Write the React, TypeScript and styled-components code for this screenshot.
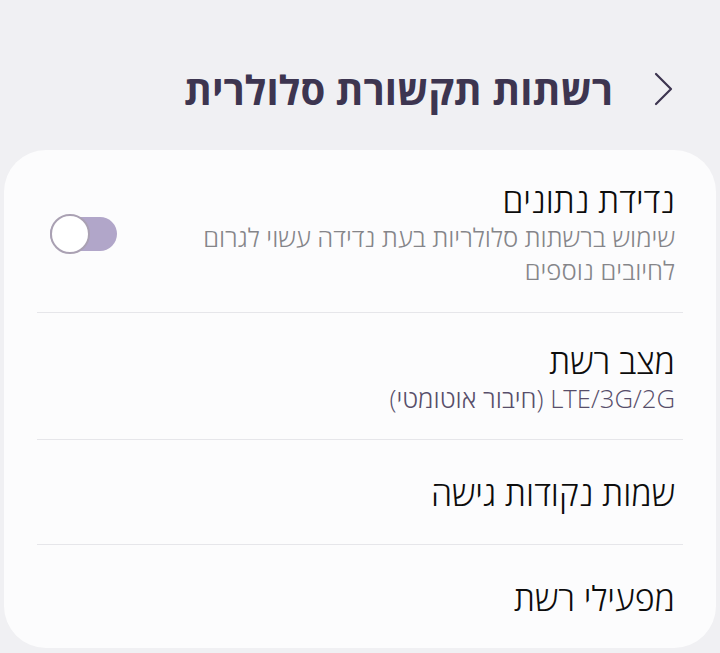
import React from 'react';
import styled, {createGlobalStyle} from "styled-components";

const GlobalStyle = createGlobalStyle`
  html, body {
    margin: 0;
    padding: 0;
    background: #f0f0f3;
  }
  body {
    font-family: "Open Sans", "DejaVu Sans", sans-serif;
  }
`;

const rows = [
  {
    key: "roaming",
    title: "נדידת נתונים",
    sub: "שימוש ברשתות סלולריות בעת נדידה עשוי לגרום לחיובים נוספים",
    toggle: true,
    pad: "30px 0 25px",
  },
  {
    key: "mode",
    title: "מצב רשת",
    sub: "LTE/3G/2G (חיבור אוטומטי)",
    accent: true,
    pad: "28px 0 24px",
  },
  {key: "apn", title: "שמות נקודות גישה", pad: "33px 0 31px"},
  {key: "operators", title: "מפעילי רשת", pad: "33px 0 31px"},
];

const App = () => {
  return (
    <>
      <GlobalStyle/>
      <Screen dir="rtl">
        <Header>
          <Back>
            <svg width="20" height="34" viewBox="0 0 20 34" fill="none">
              <path d="M2 2 L17 17 L2 32" stroke="#3d3550" strokeWidth="2.2" strokeLinecap="round" strokeLinejoin="round"/>
            </svg>
          </Back>
          <PageTitle>רשתות תקשורת סלולרית</PageTitle>
        </Header>
        <Card>
          {rows.map((row, i) => (
            <Item key={row.key} $last={i === rows.length - 1} $pad={row.pad}>
              <Texts>
                <ItemTitle>{row.title}</ItemTitle>
                {row.sub && <Sub $accent={row.accent}>{row.sub}</Sub>}
              </Texts>
              {row.toggle && (
                <Switch>
                  <Thumb/>
                </Switch>
              )}
            </Item>
          ))}
        </Card>
      </Screen>
    </>
  );
};

const Screen = styled.div`
  width: 720px;
  height: 653px;
  display: flex;
  flex-direction: column;
  overflow: hidden;
`;
const Header = styled.div`
  height: 150px;
  display: flex;
  align-items: center;
  padding: 28px 46px 0 0;
  gap: 41px;
  box-sizing: border-box;
`;
const Back = styled.div`
  display: flex;
  align-items: center;
`;
const PageTitle = styled.div`
  font-size: 40px;
  font-weight: 700;
  color: #3d3550;
`;
const Card = styled.div`
  margin: 0 4px;
  background: #fcfcfd;
  border-radius: 42px;
  padding: 0 33px;
  height: 498px;
`;
const Item = styled.div<{$last?: boolean; $pad: string}>`
  display: flex;
  align-items: center;
  justify-content: space-between;
  gap: 36px;
  border-bottom: ${p => p.$last ? "none" : "1px solid #e6e6ea"};
  padding: ${p => p.$pad};
`;
const Texts = styled.div`
  display: flex;
  flex-direction: column;
  gap: 1px;
  flex: 1;
  padding-right: 8px;
`;
const ItemTitle = styled.div`
  font-size: 34px;
  font-weight: 300;
  color: #0c0c0c;
  line-height: 40px;
`;
const Sub = styled.div<{$accent?: boolean}>`
  font-size: 25.7px;
  font-weight: 300;
  line-height: 33px;
  color: ${p => p.$accent ? "#574e6a" : "#858589"};
`;
const Switch = styled.div`
  position: relative;
  width: 67px;
  height: 34px;
  border-radius: 17px;
  background: #b1a6c9;
  margin-left: 13px;
  flex-shrink: 0;
`;
const Thumb = styled.div`
  position: absolute;
  left: 0;
  top: -3px;
  width: 40px;
  height: 40px;
  border-radius: 50%;
  background: #fff;
  border: 2px solid #aaa1b3;
  box-sizing: border-box;
`;

export default App;
